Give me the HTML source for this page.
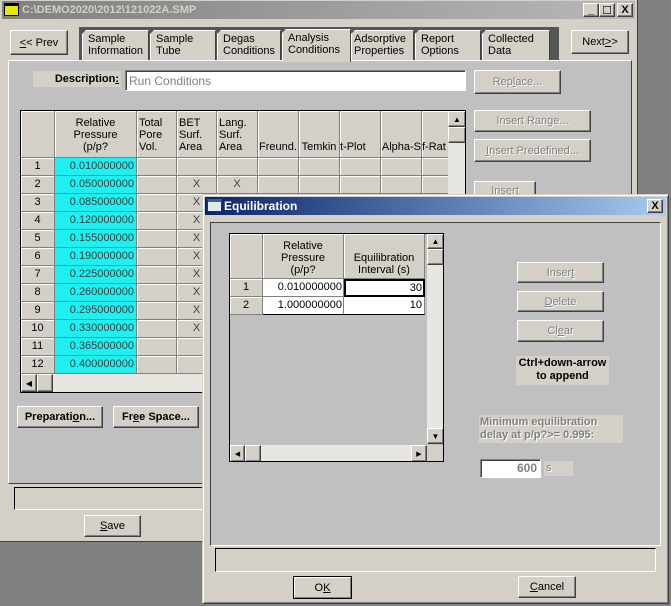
<!DOCTYPE html>
<html><head><meta charset="utf-8"><style>
*{box-sizing:border-box;margin:0;padding:0}
body{width:671px;height:606px;background:#808080;position:relative;overflow:hidden;font-family:"Liberation Sans",sans-serif;font-size:11px;color:#000}
.a{position:absolute}
.btn{position:absolute;background:#d4d0c8;border:1px solid;border-color:#fff #404040 #404040 #fff;box-shadow:inset -1px -1px 0 #808080;display:flex;align-items:center;justify-content:center;font-size:11px}
.dis{color:#808080;text-shadow:1px 1px 0 #fff}
.sunk{position:absolute;border:1px solid;border-color:#808080 #fff #fff #808080;box-shadow:inset 1px 1px 0 #404040}
.tab{position:absolute;top:30px;height:30px;background:#d4d0c8;border-left:1px solid #fff;border-top:1px solid #fff;border-right:1px solid #404040;padding:2px 0 0 5px;line-height:12px;clip-path:polygon(4px 0,100% 0,100% 100%,0 100%,0 4px)}
.g{position:absolute;border-right:1px solid #808080;border-bottom:1px solid #808080;overflow:hidden;white-space:nowrap}
.h{background:#d4d0c8;box-shadow:inset 1px 1px 0 #fff;text-align:center;line-height:12px}
.c{background:#d4d0c8;box-shadow:inset 1px 1px 0 #fff}
.cy{background:#1ef0f0;text-align:right;padding-right:2px;line-height:17px;color:#404040}
.rh{text-align:center;line-height:17px}
.x{text-align:center;line-height:17px;color:#404040}
.sb{position:absolute;background:#e8e6e0}
u{text-decoration:underline}
</style></head><body>
<!-- main window -->
<div class="a" style="left:0;top:0;width:638px;height:542px;background:#d4d0c8;border-right:1px solid #404040;border-bottom:1px solid #404040"></div>
<div class="a" style="left:2px;top:1px;width:633px;height:18px;background:linear-gradient(90deg,#808080,#b8b8b8);color:#d4d0c8;font-weight:bold;line-height:18px;padding-left:20px;font-size:11px">C:\DEMO2020\2012\121022A.SMP</div>
<div class="a" style="left:4px;top:3px;width:15px;height:13px;background:#e8e800;border:1px solid #000;border-top:3px solid #000"></div>
<div class="btn" style="left:583px;top:3px;width:16px;height:14px;font-weight:bold">_</div>
<div class="btn" style="left:599px;top:3px;width:16px;height:14px">☐</div>
<div class="btn" style="left:617px;top:3px;width:16px;height:14px;font-weight:bold">X</div>
<div class="btn" style="left:10px;top:30px;width:58px;height:25px"><u>&lt;</u>&lt; Prev</div>
<div class="btn" style="left:571px;top:30px;width:58px;height:24px">Next <u>&gt;</u>&gt;</div>
<div class="a" style="left:79px;top:27px;width:480px;height:34px;background:#555"></div>
<div class="tab" style="left:82px;width:67px">Sample<br>Information</div>
<div class="tab" style="left:150px;width:66px">Sample<br>Tube</div>
<div class="tab" style="left:217px;width:64px">Degas<br>Conditions</div>
<div class="tab" style="left:282px;width:69px;top:29px;height:33px;z-index:2">Analysis<br>Conditions</div>
<div class="tab" style="left:351px;width:63px;padding-left:2px">Adsorptive<br>Properties</div>
<div class="tab" style="left:415px;width:66px">Report<br>Options</div>
<div class="tab" style="left:482px;width:68px">Collected<br>Data</div>
<div class="a" style="left:8px;top:60px;width:624px;height:424px;background:#c0c0c0;border:1px solid;border-color:#fff #404040 #404040 #fff"></div>
<div class="a" style="left:33px;top:71px;width:88px;height:16px;background:#d4d0c8;font-weight:bold;text-align:right;line-height:16px;padding-right:2px">Description<u>:</u></div>
<div class="sunk" style="left:125px;top:70px;width:341px;height:21px;background:#fff;color:#808080;padding:3px 3px;font-size:12px">Run Conditions</div>
<div class="btn dis" style="left:474px;top:70px;width:87px;height:24px">Rep<u>l</u>ace...</div>
<div class="btn dis" style="left:474px;top:110px;width:117px;height:22px">Insert Range...</div>
<div class="btn dis" style="left:474px;top:139px;width:117px;height:23px"><u>I</u>nsert Predefined...</div>
<div class="btn dis" style="left:474px;top:181px;width:62px;height:20px">Insert</div>
<!-- main grid -->
<div class="a" style="left:20px;top:110px;width:446px;height:283px;background:#c0c0c0;border:1px solid #000;overflow:hidden" id="mg">
<div class="g h" style="left:0;top:0;width:34px;height:47px"></div>
<div class="g h" style="left:34px;top:0;width:82px;height:47px;padding-top:6px">Relative<br>Pressure<br>(p/p?</div>
<div class="g h" style="left:116px;top:0;width:40px;height:47px;text-align:left;padding:6px 0 0 2px">Total<br>Pore<br>Vol.</div>
<div class="g h" style="left:156px;top:0;width:40px;height:47px;text-align:left;padding:6px 0 0 2px">BET<br>Surf.<br>Area</div>
<div class="g h" style="left:196px;top:0;width:41px;height:47px;text-align:left;padding:6px 0 0 2px">Lang.<br>Surf.<br>Area</div>
<div class="g h" style="left:237px;top:0;width:41px;height:47px;padding-top:30px">Freund.</div>
<div class="g h" style="left:278px;top:0;width:41px;height:47px;padding-top:30px">Temkin</div>
<div class="g h" style="left:319px;top:0;width:41px;height:47px;padding-top:30px;text-align:left">t-Plot</div>
<div class="g h" style="left:360px;top:0;width:41px;height:47px;padding-top:30px;text-align:right">Alpha-S</div>
<div class="g h" style="left:401px;top:0;width:27px;height:47px;padding-top:30px;text-align:left">f-Rat</div>
<div id="rows"></div>
<div class="sb" style="left:427px;top:0;width:18px;height:262px"></div>
<div class="btn" style="left:427px;top:0;width:18px;height:16px;font-size:8px">▲</div>
<div class="btn" style="left:427px;top:16px;width:18px;height:16px"></div>
<div class="sb" style="left:0;top:263px;width:446px;height:18px"></div>
<div class="btn" style="left:0;top:263px;width:16px;height:18px;font-size:8px">◀</div>
<div class="btn" style="left:16px;top:263px;width:16px;height:18px"></div>
</div>
<div class="btn" style="left:17px;top:406px;width:86px;height:22px;font-weight:bold">Preparati<u>o</u>n...</div>
<div class="btn" style="left:113px;top:406px;width:86px;height:22px;font-weight:bold">Fr<u>e</u>e Space...</div>
<div class="sunk" style="left:14px;top:487px;width:200px;height:23px;box-shadow:none;border-color:#000 #fff #fff #000"></div>
<div class="btn" style="left:84px;top:515px;width:57px;height:22px"><u>S</u>ave</div>

<!-- dialog -->
<div class="a" style="left:202px;top:194px;width:467px;height:410px;background:#d4d0c8;border:1px solid;border-color:#d4d0c8 #404040 #404040 #d4d0c8;box-shadow:inset 1px 1px 0 #fff,inset -1px -1px 0 #808080"></div>
<div class="a" style="left:205px;top:197px;width:461px;height:18px;background:linear-gradient(90deg,#0a246a,#a6caf0);color:#fff;font-weight:bold;font-size:12px;line-height:18px;padding-left:19px">Equilibration</div>
<div class="a" style="left:207px;top:199px;width:15px;height:13px;background:#e0e8f0;border:1px solid #203060;border-top:3px solid #406090"></div>
<div class="btn" style="left:647px;top:199px;width:16px;height:14px;font-weight:bold">X</div>
<div class="a" style="left:210px;top:222px;width:451px;height:324px;background:#c0c0c0;border:1px solid;border-color:#404040 #fff #fff #404040"></div>
<div class="a" style="left:229px;top:233px;width:215px;height:229px;background:#c0c0c0;border:1px solid #000;overflow:hidden">
<div class="g h" style="left:0;top:0;width:33px;height:45px"></div>
<div class="g h" style="left:33px;top:0;width:81px;height:45px;padding-top:6px">Relative<br>Pressure<br>(p/p?</div>
<div class="g h" style="left:114px;top:0;width:81px;height:45px;padding-top:18px">Equilibration<br>Interval (s)</div>
<div class="g c rh" style="left:0;top:45px;width:33px;height:18px">1</div>
<div class="g" style="left:33px;top:45px;width:81px;height:18px;background:#fff;text-align:right;line-height:17px;padding-right:1px">0.010000000</div>
<div class="g" style="left:114px;top:45px;width:81px;height:18px;background:#fff;text-align:right;line-height:14px;padding-right:1px;border:2px solid #000">30</div>
<div class="g c rh" style="left:0;top:63px;width:33px;height:18px">2</div>
<div class="g" style="left:33px;top:63px;width:81px;height:18px;background:#fff;text-align:right;line-height:17px;padding-right:1px;border-bottom:1px solid #000">1.000000000</div>
<div class="g" style="left:114px;top:63px;width:81px;height:18px;background:#fff;text-align:right;line-height:17px;padding-right:2px;border-bottom:1px solid #000">10</div>
<div class="sb" style="left:197px;top:0;width:17px;height:210px"></div>
<div class="btn" style="left:197px;top:0;width:17px;height:15px;font-size:8px">▲</div>
<div class="btn" style="left:197px;top:15px;width:17px;height:16px"></div>
<div class="btn" style="left:197px;top:194px;width:17px;height:16px;font-size:8px">▼</div>
<div class="sb" style="left:0;top:211px;width:197px;height:17px"></div>
<div class="btn" style="left:0;top:211px;width:15px;height:17px;font-size:7px">◀</div>
<div class="btn" style="left:15px;top:211px;width:16px;height:17px"></div>
<div class="btn" style="left:181px;top:211px;width:16px;height:17px;font-size:7px">▶</div>
<div class="a" style="left:197px;top:211px;width:17px;height:17px;background:#d4d0c8"></div>
</div>
<div class="btn dis" style="left:517px;top:262px;width:87px;height:21px">Inser<u>t</u></div>
<div class="btn dis" style="left:517px;top:291px;width:87px;height:21px"><u>D</u>elete</div>
<div class="btn dis" style="left:517px;top:320px;width:87px;height:22px">Cl<u>e</u>ar</div>
<div class="a" style="left:516px;top:356px;width:93px;height:29px;background:#d4d0c8;font-weight:bold;text-align:center;line-height:13px;padding-top:1px">Ctrl+down-arrow<br>to append</div>
<div class="a dis" style="left:479px;top:415px;width:144px;height:28px;background:#d4d0c8;font-weight:bold;line-height:13px;padding:1px 0 0 1px">Minimum equilibration<br>delay at p/p?&gt;= 0.995:</div>
<div class="sunk" style="left:480px;top:459px;width:61px;height:19px;background:#fff;color:#808080;text-align:right;padding-right:3px;line-height:16px;font-size:12px;font-weight:bold">600</div>
<div class="a dis" style="left:544px;top:461px;width:29px;height:15px;background:#d4d0c8;padding-left:2px;line-height:15px">s</div>
<div class="sunk" style="left:215px;top:548px;width:441px;height:24px;box-shadow:none;border-color:#000 #fff #fff #000"></div>
<div class="btn" style="left:293px;top:576px;width:59px;height:23px;border:1px solid #000;box-shadow:inset 1px 1px 0 #fff,inset -1px -1px 0 #808080">O<u>K</u></div>
<div class="btn" style="left:518px;top:576px;width:58px;height:22px"><u>C</u>ancel</div>
<script>
var v=["0.010000000","0.050000000","0.085000000","0.120000000","0.155000000","0.190000000","0.225000000","0.260000000","0.295000000","0.330000000","0.365000000","0.400000000","0.435000000"];
var h="",L=[116,156,196,237,278,319,360,401],W=[40,40,41,41,41,41,41,27];
for(var i=0;i<13;i++){var t=47+i*18;
h+='<div class="g c rh" style="left:0;top:'+t+'px;width:34px;height:18px">'+(i+1)+'</div>';
h+='<div class="g cy" style="left:34px;top:'+t+'px;width:82px;height:18px">'+v[i]+'</div>';
for(var j=0;j<8;j++){var x=(j==1&&i>0&&i<10)||(j==2&&i==1)?'X':'';
h+='<div class="g c x" style="left:'+L[j]+'px;top:'+t+'px;width:'+W[j]+'px;height:18px">'+x+'</div>';}}
document.getElementById('rows').outerHTML=h;
</script>
</body></html>
